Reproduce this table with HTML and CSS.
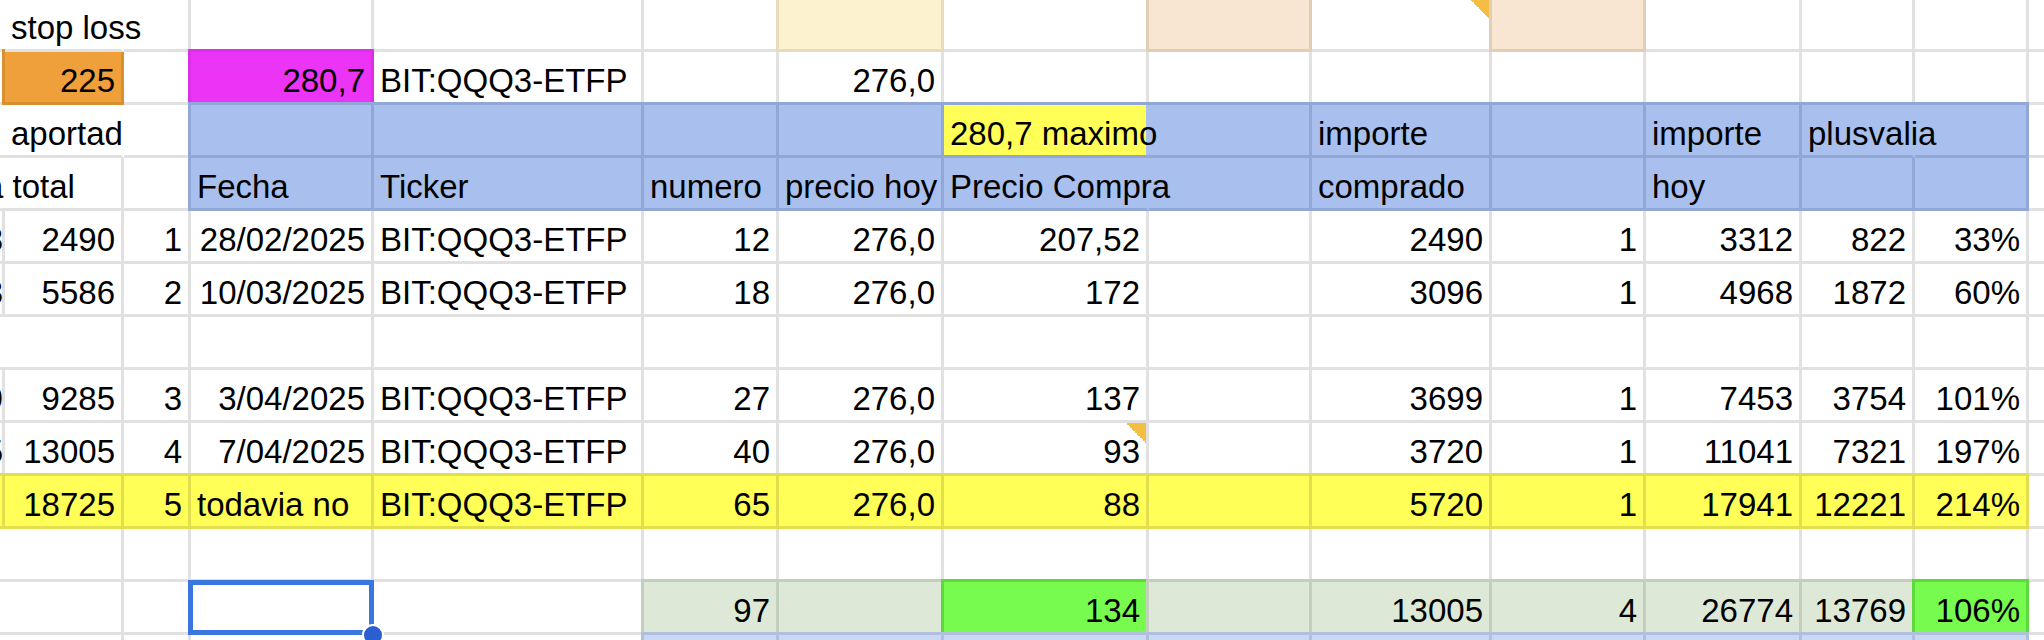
FILE: index.html
```html
<!DOCTYPE html>
<html lang="es">
<head>
<meta charset="utf-8">
<title>QQQ3</title>
<link rel="stylesheet" href="styles.css">
</head>
<body>
<div class="sheet">
  <!-- Row A -->
  <div class="c"></div>
  <div class="c ov xr-white">stop loss</div>
  <div class="c"></div>
  <div class="c"></div>
  <div class="c"></div>
  <div class="c"></div>
  <div class="c fill ly"></div>
  <div class="c"></div>
  <div class="c fill pe"></div>
  <div class="c cm cm-a"></div>
  <div class="c fill pe"></div>
  <div class="c"></div>
  <div class="c"></div>
  <div class="c"></div>
  <div class="c"></div>

  <!-- Row B -->
  <div class="c"></div>
  <div class="c r fill or">225</div>
  <div class="c"></div>
  <div class="c r fill mg">280,7</div>
  <div class="c">BIT:QQQ3-ETFP</div>
  <div class="c"></div>
  <div class="c r">276,0</div>
  <div class="c"></div>
  <div class="c"></div>
  <div class="c"></div>
  <div class="c"></div>
  <div class="c"></div>
  <div class="c"></div>
  <div class="c"></div>
  <div class="c"></div>

  <!-- Row C -->
  <div class="c"></div>
  <div class="c ov xr-white">aportad</div>
  <div class="c"></div>
  <div class="c fill bl"></div>
  <div class="c fill bl"></div>
  <div class="c fill bl"></div>
  <div class="c fill bl"></div>
  <div class="c fill ymax ov">280,7 maximo</div>
  <div class="c fill bl"></div>
  <div class="c fill bl">importe</div>
  <div class="c fill bl"></div>
  <div class="c fill bl">importe</div>
  <div class="c fill bl ov xr-blue">plusvalia</div>
  <div class="c fill bl"></div>
  <div class="c"></div>

  <!-- Row D -->
  <div class="c xr-white"></div>
  <div class="c cut">a total</div>
  <div class="c"></div>
  <div class="c fill bl">Fecha</div>
  <div class="c fill bl">Ticker</div>
  <div class="c fill bl">numero</div>
  <div class="c fill bl">precio hoy</div>
  <div class="c fill bl ov xr-blue">Precio Compra</div>
  <div class="c fill bl"></div>
  <div class="c fill bl">comprado</div>
  <div class="c fill bl"></div>
  <div class="c fill bl">hoy</div>
  <div class="c fill bl"></div>
  <div class="c fill bl"></div>
  <div class="c"></div>

  <!-- Row E -->
  <div class="c r frag"><span>8</span></div>
  <div class="c r">2490</div>
  <div class="c r">1</div>
  <div class="c r">28/02/2025</div>
  <div class="c">BIT:QQQ3-ETFP</div>
  <div class="c r">12</div>
  <div class="c r">276,0</div>
  <div class="c r">207,52</div>
  <div class="c"></div>
  <div class="c r">2490</div>
  <div class="c r">1</div>
  <div class="c r">3312</div>
  <div class="c r">822</div>
  <div class="c r">33%</div>
  <div class="c"></div>

  <!-- Row F -->
  <div class="c r frag"><span>3</span></div>
  <div class="c r">5586</div>
  <div class="c r">2</div>
  <div class="c r">10/03/2025</div>
  <div class="c">BIT:QQQ3-ETFP</div>
  <div class="c r">18</div>
  <div class="c r">276,0</div>
  <div class="c r">172</div>
  <div class="c"></div>
  <div class="c r">3096</div>
  <div class="c r">1</div>
  <div class="c r">4968</div>
  <div class="c r">1872</div>
  <div class="c r">60%</div>
  <div class="c"></div>

  <!-- Row G -->
  <div class="c"></div>
  <div class="c"></div>
  <div class="c"></div>
  <div class="c"></div>
  <div class="c"></div>
  <div class="c"></div>
  <div class="c"></div>
  <div class="c"></div>
  <div class="c"></div>
  <div class="c"></div>
  <div class="c"></div>
  <div class="c"></div>
  <div class="c"></div>
  <div class="c"></div>
  <div class="c"></div>

  <!-- Row H -->
  <div class="c r frag"><span>9</span></div>
  <div class="c r">9285</div>
  <div class="c r">3</div>
  <div class="c r">3/04/2025</div>
  <div class="c">BIT:QQQ3-ETFP</div>
  <div class="c r">27</div>
  <div class="c r">276,0</div>
  <div class="c r">137</div>
  <div class="c"></div>
  <div class="c r">3699</div>
  <div class="c r">1</div>
  <div class="c r">7453</div>
  <div class="c r">3754</div>
  <div class="c r">101%</div>
  <div class="c"></div>

  <!-- Row I -->
  <div class="c r frag"><span>5</span></div>
  <div class="c r">13005</div>
  <div class="c r">4</div>
  <div class="c r">7/04/2025</div>
  <div class="c">BIT:QQQ3-ETFP</div>
  <div class="c r">40</div>
  <div class="c r">276,0</div>
  <div class="c r cm cm-b">93</div>
  <div class="c"></div>
  <div class="c r">3720</div>
  <div class="c r">1</div>
  <div class="c r">11041</div>
  <div class="c r">7321</div>
  <div class="c r">197%</div>
  <div class="c"></div>

  <!-- Row J -->
  <div class="c fill ye"></div>
  <div class="c r fill ye">18725</div>
  <div class="c r fill ye">5</div>
  <div class="c fill ye">todavia no</div>
  <div class="c fill ye">BIT:QQQ3-ETFP</div>
  <div class="c r fill ye">65</div>
  <div class="c r fill ye">276,0</div>
  <div class="c r fill ye">88</div>
  <div class="c fill ye"></div>
  <div class="c r fill ye">5720</div>
  <div class="c r fill ye">1</div>
  <div class="c r fill ye">17941</div>
  <div class="c r fill ye">12221</div>
  <div class="c r fill ye">214%</div>
  <div class="c"></div>

  <!-- Row K -->
  <div class="c"></div>
  <div class="c"></div>
  <div class="c"></div>
  <div class="c"></div>
  <div class="c"></div>
  <div class="c"></div>
  <div class="c"></div>
  <div class="c"></div>
  <div class="c"></div>
  <div class="c"></div>
  <div class="c"></div>
  <div class="c"></div>
  <div class="c"></div>
  <div class="c"></div>
  <div class="c"></div>

  <!-- Row L -->
  <div class="c"></div>
  <div class="c"></div>
  <div class="c"></div>
  <div class="c sel"><div class="sel-box"><span class="handle"></span></div></div>
  <div class="c"></div>
  <div class="c r fill gr">97</div>
  <div class="c fill gr"></div>
  <div class="c r fill bg">134</div>
  <div class="c fill gr"></div>
  <div class="c r fill gr">13005</div>
  <div class="c r fill gr">4</div>
  <div class="c r fill gr">26774</div>
  <div class="c r fill gr">13769</div>
  <div class="c r fill bg">106%</div>
  <div class="c"></div>

  <!-- Row M -->
  <div class="c"></div>
  <div class="c"></div>
  <div class="c"></div>
  <div class="c"></div>
  <div class="c"></div>
  <div class="c fill lb"></div>
  <div class="c fill lb"></div>
  <div class="c fill lb"></div>
  <div class="c fill lb"></div>
  <div class="c fill lb"></div>
  <div class="c fill lb"></div>
  <div class="c fill lb"></div>
  <div class="c fill lb"></div>
  <div class="c fill lb"></div>
  <div class="c"></div>
</div>
</body>
</html>
```

FILE: styles.css
```css
html, body {
  margin: 0;
  padding: 0;
  background: #ffffff;
}

body {
  width: 2044px;
  height: 640px;
  overflow: hidden;
  font-family: "Liberation Sans", Arial, sans-serif;
  font-size: 33px;
  color: #000000;
}

.sheet {
  display: grid;
  grid-template-columns: 5px 119px 67px 183px 270px 135px 165px 205px 163px 180px 154px 156px 113px 114px 80px;
  grid-template-rows: 52px repeat(12, 53px);
  width: max-content;
}

.c {
  box-sizing: border-box;
  min-width: 0;
  display: flex;
  align-items: flex-end;
  padding: 0 6px 5px 6px;
  line-height: 33px;
  white-space: nowrap;
  border-right: 3px solid #e1e1e1;
  border-bottom: 3px solid #e1e1e1;
  background: #ffffff;
}

.r {
  justify-content: flex-end;
}

.ov {
  z-index: 1;
}

.xr-white {
  border-right-color: #ffffff;
}

.fill {
  background: var(--f);
  border-right-color: var(--b);
  border-bottom-color: var(--b);
  box-shadow: -3px 0 0 var(--b), 0 -3px 0 var(--b), -3px -3px 0 var(--b);
}

.or { --f: #f0a03b; --b: #d9912f; }
.mg { --f: #eb34f6; --b: #dc30e8; }
.ly { --f: #fcf2d0; --b: #e8dcba; }
.pe { --f: #f8e6d3; --b: #e2cdb5; }
.bl { --f: #a9c0ee; --b: #91a8d7; }
.ye { --f: #ffff57; --b: #e3de4e; }
.gr { --f: #dde9d6; --b: #c3cfbd; }
.bg { --f: #77fb4e; --b: #5ed93c; }
.lb { --f: #c9d8f5; --b: #afbfdc; }

.ymax {
  --f: #ffff57;
  --b: #91a8d7;
}

.fill.ymax,
.fill.xr-blue {
  border-right-color: #a9c0ee;
}

.cut {
  text-indent: -26px;
  overflow: visible;
}

.frag {
  padding: 0 0 5px 0;
}

.frag span {
  margin-right: -1px;
}

.cm {
  background-repeat: no-repeat;
  background-position: top right;
  background-image: linear-gradient(to bottom left, #f4bd44 50%, rgba(244, 189, 68, 0) 50%);
}

.cm-a {
  background-size: 18px 18px;
}

.cm-b {
  background-size: 20px 20px;
}

.sel {
  position: relative;
}

.sel-box {
  position: absolute;
  left: -3px;
  right: -3px;
  top: -2px;
  bottom: -3px;
  border: 5px solid #3a76e0;
  z-index: 5;
}

.handle {
  position: absolute;
  left: 169px;
  top: 39px;
  width: 18px;
  height: 18px;
  border-radius: 50%;
  background: #2b5fd1;
  border: 2px solid #ffffff;
}
```
